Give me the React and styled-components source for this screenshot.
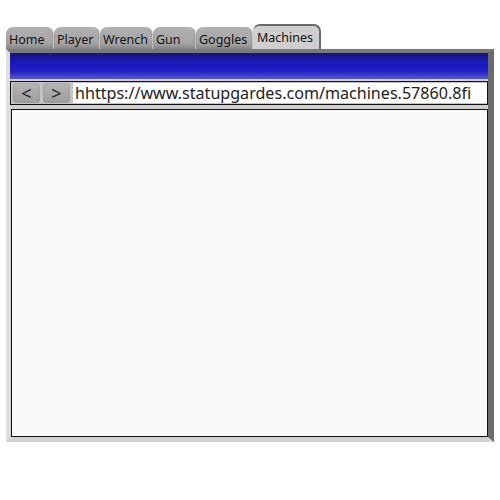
import React from "react";
import styled, { createGlobalStyle } from "styled-components";

const GlobalStyle = createGlobalStyle`
  html, body {
    margin: 0;
    padding: 0;
    background: #fff;
    width: 500px;
    height: 500px;
    overflow: hidden;
  }
`;

const Page = styled.div`
  padding: 24px 0 0 6px;
  font-family: "Noto Sans", "DejaVu Sans", sans-serif;
`;

const TabStrip = styled.div`
  display: flex;
  align-items: flex-end;
  height: 25px;
`;

const Tab = styled.div`
  box-sizing: border-box;
  width: ${(p) => p.width}px;
  height: ${(p) => (p.active ? 25 : 22)}px;
  padding: ${(p) => (p.active ? "4px 0 0 4px" : "5px 0 0 3px")};
  font-size: 12.5px;
  line-height: 16px;
  color: #111;
  background: ${(p) =>
    p.active
      ? "#cfcfcf"
      : "linear-gradient(#b0b0b0 0%, #a6a6a6 70%, #8f8f8f 100%)"};
  border-radius: 7px 7px 0 0;
  border-top: ${(p) => (p.active ? "2px solid #6a6a6a" : "none")};
  border-right: ${(p) => (p.active ? "2px solid #6a6a6a" : "1px solid #c2c2c2")};
  box-shadow: ${(p) => (p.active ? "none" : "inset 0 -2px 2px #8a8a8a")};
`;

const Frame = styled.div`
  box-sizing: border-box;
  width: 488px;
  height: 393px;
  background: #d0d0d0;
  border-left: 4px solid #dedede;
  border-right: 6px solid #6b6b6b;
  border-top: 4px solid #7a7a7a;
  border-bottom: 5px solid #d2d2d2;
  display: flex;
  flex-direction: column;
`;

const TitleBar = styled.div`
  height: 26px;
  background: linear-gradient(#14147a 0%, #1a1ab8 35%, #2020c8 70%, #5a5acc 100%);
`;

const AddressBar = styled.div`
  box-sizing: border-box;
  height: 24px;
  margin-top: 2px;
  border: 1.5px solid #111;
  display: flex;
  align-items: stretch;
  background: #c4c4c4;
  padding: 1px 0 1px 2px;
  gap: 3px;
`;

const NavButton = styled.div`
  width: 27px;
  background: linear-gradient(#b5b5b5, #9e9e9e);
  border-radius: 4px;
  display: flex;
  align-items: center;
  justify-content: center;
  font-size: 18px;
  line-height: 18px;
  color: #222;
  box-shadow: inset 0 0 2px #8a8a8a;
`;

const UrlField = styled.div`
  flex: 1;
  background: #fff;
  font-size: 16.1px;
  line-height: 20px;
  white-space: nowrap;
  overflow: hidden;
  color: #222;
  padding-left: 2px;
`;

const Content = styled.div`
  flex: 1;
  margin: 4px 0 0 1px;
  background: #fafafa;
  border: 1.5px solid #111;
`;

export default function App() {
  const tabs = [
    { label: "Home", width: 48 },
    { label: "Player", width: 46 },
    { label: "Wrench", width: 53 },
    { label: "Gun", width: 43 },
    { label: "Goggles", width: 57 },
    { label: "Machines", width: 68, active: true },
  ];
  return (
    <>
      <GlobalStyle />
      <Page>
        <TabStrip>
          {tabs.map((t) => (
            <Tab key={t.label} width={t.width} active={t.active}>
              {t.label}
            </Tab>
          ))}
        </TabStrip>
        <Frame>
          <TitleBar />
          <AddressBar>
            <NavButton>&lt;</NavButton>
            <NavButton>&gt;</NavButton>
            <UrlField>hhttps://www.statupgardes.com/machines.57860.8fi</UrlField>
          </AddressBar>
          <Content />
        </Frame>
      </Page>
    </>
  );
}
